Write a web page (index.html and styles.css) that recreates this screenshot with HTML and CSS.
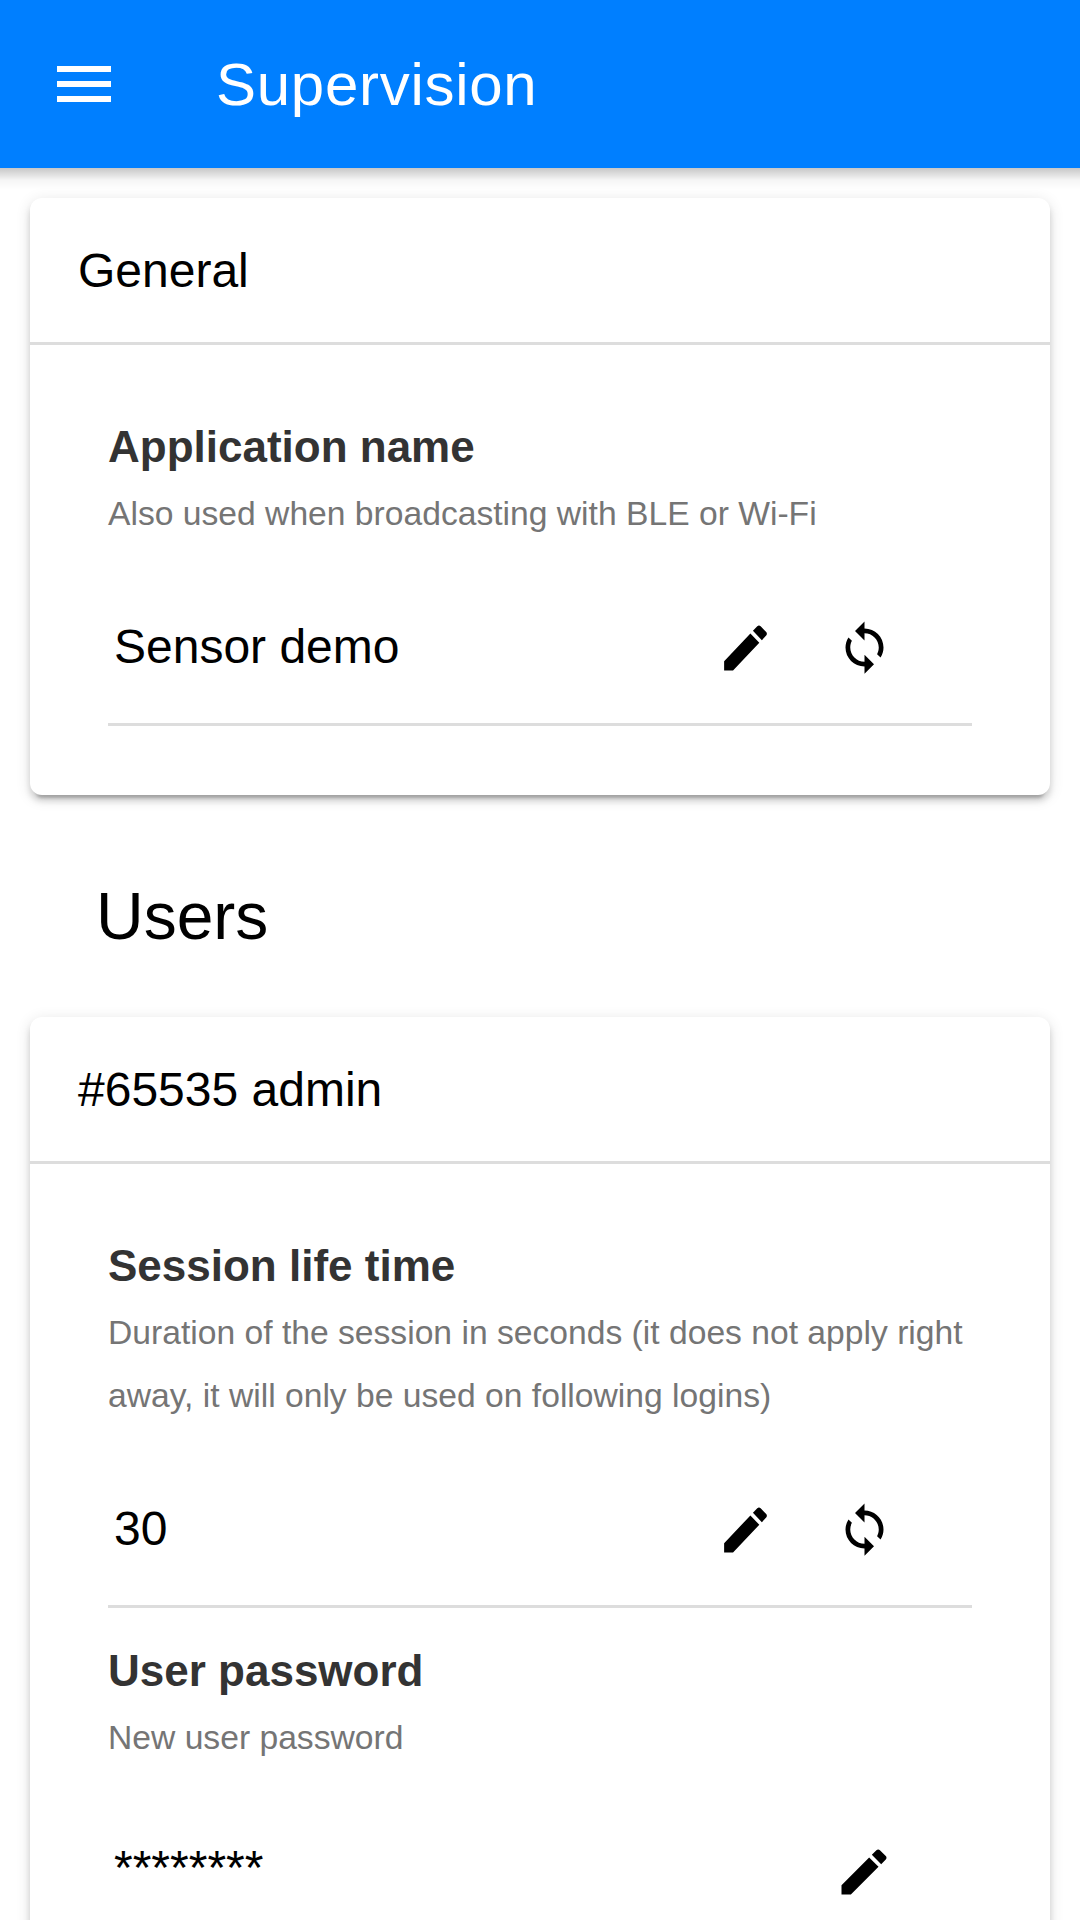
FILE: index.html
```html
<!DOCTYPE html>
<html lang="en">
<head>
<meta charset="utf-8">
<title>Supervision</title>
<link rel="stylesheet" href="styles.css">
</head>
<body>
<svg class="sprite" aria-hidden="true">
  <symbol id="icon-edit" viewBox="0 0 24 24" preserveAspectRatio="none"><path d="M3 17.25V21h3.75L17.81 9.94l-3.75-3.75L3 17.25zM20.71 7.04c.39-.39.39-1.02 0-1.41l-2.34-2.34c-.39-.39-1.02-.39-1.41 0l-1.83 1.83 3.75 3.75 1.83-1.83z"/></symbol>
  <symbol id="icon-loop" viewBox="0 0 24 24"><path d="M12 4V1L8 5l4 4V6c3.31 0 6 2.69 6 6 0 1.01-.25 1.97-.7 2.8l1.46 1.46C19.54 15.03 20 13.57 20 12c0-4.42-3.58-8-8-8zm0 14c-3.31 0-6-2.69-6-6 0-1.01.25-1.97.7-2.8L5.24 7.74C4.46 8.97 4 10.43 4 12c0 4.42 3.58 8 8 8v3l4-4-4-4v3z"/></symbol>
</svg>
<header class="navbar">
  <svg class="menu" viewBox="0 0 18 12"><path d="M0 0h18v2H0zM0 5h18v2H0zM0 10h18v2H0z"/></svg>
  <h1 class="navbar-title">Supervision</h1>
</header>
<main class="page">
  <section class="card">
    <h2 class="card-header">General</h2>
    <div class="card-body">
      <div class="setting">
        <h3 class="setting-title">Application name</h3>
        <p class="setting-info">Also used when broadcasting with BLE or Wi-Fi</p>
        <div class="setting-row">
          <span class="setting-value">Sensor demo</span>
          <svg class="icon icon-pair"><use href="#icon-edit"/></svg>
          <svg class="icon"><use href="#icon-loop"/></svg>
        </div>
      </div>
    </div>
  </section>
  <h2 class="section-title">Users</h2>
  <section class="card">
    <h2 class="card-header">#65535 admin</h2>
    <div class="card-body">
      <div class="setting">
        <h3 class="setting-title">Session life time</h3>
        <p class="setting-info">Duration of the session in seconds (it does not apply right away, it will only be used on following logins)</p>
        <div class="setting-row">
          <span class="setting-value">30</span>
          <svg class="icon icon-pair"><use href="#icon-edit"/></svg>
          <svg class="icon"><use href="#icon-loop"/></svg>
        </div>
      </div>
      <div class="setting">
        <h3 class="setting-title">User password</h3>
        <p class="setting-info">New user password</p>
        <div class="setting-row setting-row-single">
          <span class="setting-value setting-value-masked">********</span>
          <svg class="icon icon-single"><use href="#icon-edit"/></svg>
        </div>
      </div>
    </div>
  </section>
</main>
</body>
</html>
```
FILE: styles.css
```css
* { box-sizing: border-box; margin: 0; }
html, body { height: 1920px; overflow: hidden; }
body {
  display: flex;
  flex-direction: column;
  background: #fff;
  color: #000;
  font: 48px/63px "Liberation Sans", Arial, sans-serif;
}
.sprite { display: none; }
.navbar {
  position: relative;
  flex: none;
  display: flex;
  align-items: center;
  gap: 105px;
  height: 168px;
  padding-left: 57px;
  background: #007fff;
  color: #fff;
}
.navbar::after {
  content: "";
  position: absolute;
  top: 100%;
  left: 0;
  right: 0;
  height: 24px;
  background: linear-gradient(to bottom, rgba(0,0,0,.22) 0%, rgba(0,0,0,.08) 40%, rgba(0,0,0,.04) 50%, rgba(0,0,0,0) 90%);
}
.menu { width: 54px; height: 36px; fill: #fff; }
.navbar-title { font-size: 60px; font-weight: 400; letter-spacing: .72px; }
.page { flex: 1; min-height: 0; overflow: hidden; padding: 30px 30px 0; }
.card {
  border-radius: 12px;
  background: #fff;
  box-shadow: 0 6px 6px rgba(0,0,0,.14), 0 9px 3px -6px rgba(0,0,0,.2), 0 3px 15px rgba(0,0,0,.12);
}
.card-header {
  height: 147px;
  padding: 1px 48px 0;
  border-bottom: 3px solid #ddd;
  font-size: 48px;
  font-weight: 400;
  line-height: 144px;
}
.card-body { padding: 39px 78px 69px; }
.setting { padding-top: 31px; border-bottom: 3px solid #ddd; }
.setting-title { margin-bottom: 4px; font-size: 44px; color: #333; }
.setting-info { font-size: 33.65px; color: #757575; }
.setting-row {
  display: flex;
  align-items: center;
  padding: 70px 79.5px 45px 6px;
}
.setting-row-single { padding-right: 78px; }
.setting-value { flex: 1; }
.setting-value-masked { margin: -3px 0 3px; }
.icon { width: 57px; height: 57px; margin: 1px 0 -1px; }
.icon-pair { height: 60px; margin-right: 61.5px; }
.icon-single { width: 60px; height: 60px; }
.section-title {
  padding: 90px 66px 69px;
  font-size: 66px;
  font-weight: 400;
  line-height: 63px;
}
```
